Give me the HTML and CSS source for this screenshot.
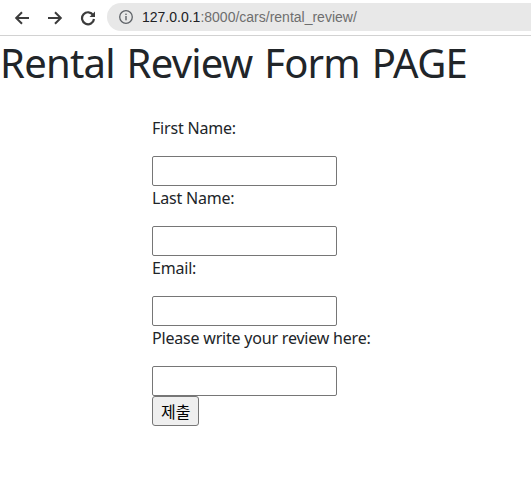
FILE: index.html
```html
<!DOCTYPE html>
<html lang="ko">
<head>
<meta charset="utf-8">
<title>Rental Review</title>
<link rel="stylesheet" href="styles.css">
</head>
<body>
<div class="chrome">
  <div class="nav">
    <svg class="ico" width="16" height="16" viewBox="0 0 16 16"><path d="M15 8H2.5M8 2.2L2.2 8 8 13.8" fill="none" stroke="#3c3c3c" stroke-width="2"/></svg>
    <svg class="ico" width="16" height="16" viewBox="0 0 16 16"><path d="M1 8h12.5M8 2.2L13.8 8 8 13.8" fill="none" stroke="#3c3c3c" stroke-width="2"/></svg>
    <svg class="ico" width="16" height="16" viewBox="0 0 16 16"><path d="M13.2 5.2A6 6 0 1 0 14 9" fill="none" stroke="#3c3c3c" stroke-width="2.2"/><path d="M15 1.5v5.5H9.5z" fill="#3c3c3c"/></svg>
  </div>
  <div class="omnibox">
    <svg class="info" width="16" height="16" viewBox="0 0 16 16"><circle cx="8" cy="8" r="6.3" fill="none" stroke="#5f6368" stroke-width="1.3"/><rect x="7.3" y="7" width="1.4" height="4.3" fill="#5f6368"/><rect x="7.3" y="4.6" width="1.4" height="1.4" fill="#5f6368"/></svg>
    <span class="url"><span class="host">127.0.0.1</span>:8000/cars/rental_review/</span>
  </div>
</div>
<h1 class="title">Rental Review Form PAGE</h1>
<form class="review-form">
  <p class="lbl">First Name:</p>
  <input class="field" type="text">
  <p class="lbl">Last Name:</p>
  <input class="field" type="text">
  <p class="lbl">Email:</p>
  <input class="field" type="text">
  <p class="lbl">Please write your review here:</p>
  <input class="field" type="text">
  <button class="submit" type="button">제출</button>
</form>
</body>
</html>
```
FILE: styles.css
```css
html, body {
  margin: 0;
  padding: 0;
  background: #fff;
}
body {
  font-family: "Noto Sans", "Noto Sans CJK KR", sans-serif;
  color: #212529;
  font-size: 16px;
  line-height: 1.5;
}
.chrome {
  border-bottom: 1px solid #d2d2d2;
  display: flex;
  align-items: center;
  box-sizing: border-box;
  height: 36px;
}
.nav {
  display: flex;
  align-items: center;
  gap: 17px;
  padding-left: 14px;
  width: 107px;
  box-sizing: border-box;
}
.ico { display: block; }
.omnibox {
  flex: 1;
  height: 28px;
  background: #e8e8e8;
  border-radius: 14px 0 0 14px;
  display: flex;
  align-items: center;
  padding-left: 11px;
  margin-top: -1px;
}
.info { display: block; margin-right: 8px; }
.url {
  font-family: "Liberation Sans", Arial, sans-serif;
  font-size: 14px;
  color: #6e6e6e;
  line-height: 1;
}
.host { color: #202124; }
.title {
  margin: 0 0 8px 0;
  padding-top: 3px;
  font-size: 40px;
  font-weight: 400;
  line-height: 1.2;
  letter-spacing: -0.75px;
  word-spacing: 2px;
}
.review-form {
  padding: 21px 0 0 152px;
}
.lbl {
  margin: 0 0 16px 0;
  line-height: 24px;
  letter-spacing: -0.2px;
}
.field {
  display: block;
  box-sizing: border-box;
  width: 185px;
  height: 30px;
  margin: 0;
  border: 1px solid #767676;
  border-radius: 2px;
  padding: 1px 2px;
  font: inherit;
}
.submit {
  display: block;
  box-sizing: border-box;
  height: 30px;
  padding: 0 8px;
  margin: 0;
  font-family: "Noto Sans CJK KR", sans-serif;
  font-size: 16px;
  color: #000;
  background: #efefef;
  border: 1px solid #767676;
  border-radius: 3px;
}
```
